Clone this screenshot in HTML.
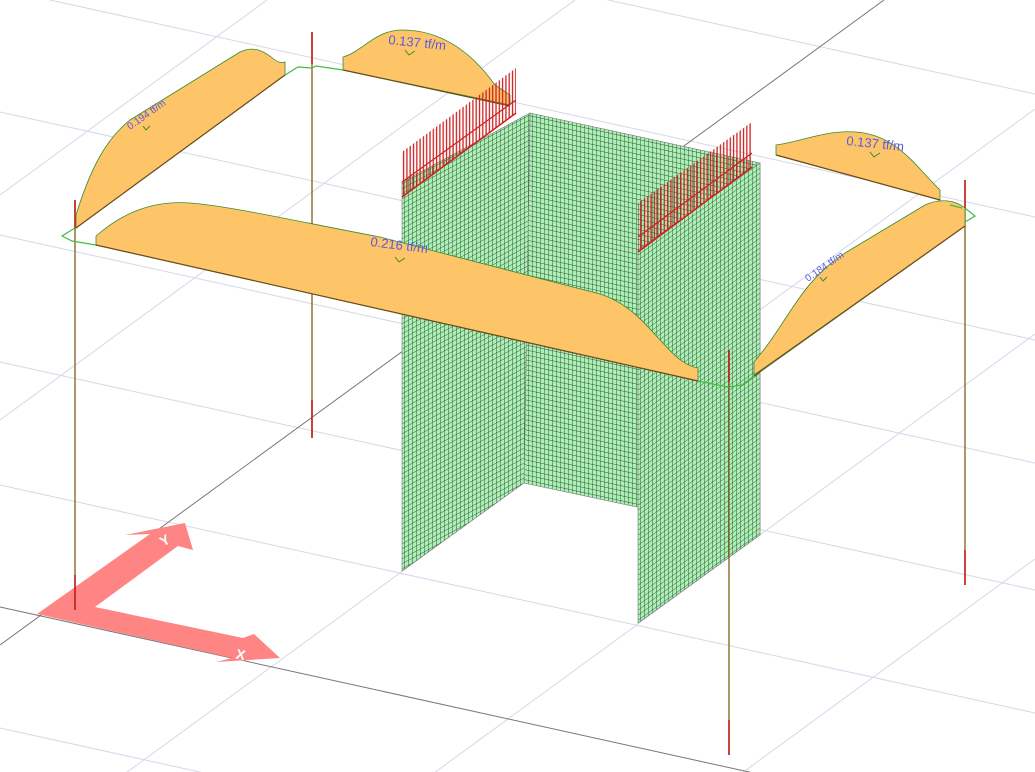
<!DOCTYPE html>
<html><head><meta charset="utf-8"><style>
html,body{margin:0;padding:0;background:#fff;overflow:hidden;width:1035px;height:772px;}
svg{display:block;}
text{font-family:"Liberation Sans",sans-serif;fill:#5a5ae0;}
</style></head><body>
<svg width="1035" height="772" viewBox="0 0 1035 772" xmlns="http://www.w3.org/2000/svg">
<defs>
<pattern id="mL" patternUnits="userSpaceOnUse" width="4" height="5" patternTransform="skewY(-28.3)">
<rect width="4" height="5" fill="#a9f2b3"/>
<path d="M0 0V5M0 0H4" stroke="#3a4a3c" stroke-width="0.9"/>
</pattern>
<pattern id="mB" patternUnits="userSpaceOnUse" width="4" height="5" patternTransform="skewY(12.3)">
<rect width="4" height="5" fill="#a9f2b3"/>
<path d="M0 0V5M0 0H4" stroke="#3a4a3c" stroke-width="0.9"/>
</pattern>
<pattern id="mR" patternUnits="userSpaceOnUse" width="4" height="5" patternTransform="skewY(-35.5)">
<rect width="4" height="5" fill="#a9f2b3"/>
<path d="M0 0V5M0 0H4" stroke="#3a4a3c" stroke-width="0.9"/>
</pattern>
<pattern id="rd" patternUnits="userSpaceOnUse" width="3.3" height="10">
<path d="M1 0V10" stroke="#cc2020" stroke-width="1.3"/>
</pattern>
</defs>

<g stroke="#d6d6ea" stroke-width="1">
<line x1="0" y1="-134" x2="1035" y2="94"/>
<line x1="0" y1="-11" x2="1035" y2="217"/>
<line x1="0" y1="112" x2="1035" y2="340"/>
<line x1="0" y1="235" x2="1035" y2="463"/>
<line x1="0" y1="362" x2="1035" y2="590"/>
<line x1="0" y1="485" x2="1035" y2="713"/>
<line x1="0" y1="728" x2="1035" y2="956"/>
<line x1="0" y1="195" x2="267" y2="0"/>
<line x1="0" y1="420" x2="575" y2="0"/>
<line x1="0" y1="865" x2="1035" y2="109"/>
<line x1="0" y1="1090" x2="1035" y2="334"/>
<line x1="0" y1="1315" x2="1035" y2="559"/>
<line x1="0" y1="1540" x2="1035" y2="784"/>
</g>
<g stroke="#777" stroke-width="1">
<line x1="0" y1="607" x2="1035" y2="835"/>
<line x1="0" y1="645" x2="884" y2="0"/>
</g>

<path d="M37,614 L150,534 L125,535 L185,523 L193,550 L178,546 L95,607 L243,638 L254,634 L280,658 L216,662 L232,658 Z" fill="#ff8585"/>
<text x="160" y="545" transform="rotate(-30 165 540)" style="fill:#fff;font-weight:bold;font-size:14px">Y</text>
<text x="236" y="660" transform="rotate(12 243 655)" style="fill:#fff;font-weight:bold;font-size:14px">X</text>

<g stroke="#8a6a2a" stroke-width="1.4">
<line x1="75" y1="200" x2="75" y2="610"/>
<line x1="312" y1="32" x2="312" y2="438"/>
<line x1="965" y1="180" x2="965" y2="585"/>
</g>
<g stroke="#cc2020" stroke-width="1.6">
<line x1="75" y1="200" x2="75" y2="228"/>
<line x1="312" y1="32" x2="312" y2="64"/>
<line x1="312" y1="400" x2="312" y2="438"/>
<line x1="965" y1="180" x2="965" y2="208"/>
<line x1="965" y1="550" x2="965" y2="585"/>
<line x1="75" y1="575" x2="75" y2="610"/>
</g>

<path d="M343,70 L343,57 C362,52 375,30 402,30 C440,30 470,50 495,85 L510,95 L510,105 Z" fill="#fdc567" stroke="#3a8a30" stroke-width="0.8"/>
<line x1="343" y1="70" x2="510" y2="106" stroke="#6a4a1a" stroke-width="1.2"/>
<text x="388" y="44" font-size="13" transform="rotate(6 388 44)">0.137 tf/m</text>
<path d="M405,50 l4,5 l6,-4" stroke="#3a8a30" fill="none"/>

<path d="M76,228 L76,215 C90,170 105,140 130,120 L240,52 C255,45 265,52 275,60 C280,64 285,62 285,62 L285,75 Z" fill="#fdc567" stroke="#3a8a30" stroke-width="0.8"/>
<line x1="76" y1="228" x2="285" y2="75" stroke="#6a4a1a" stroke-width="1.2"/>
<text x="130" y="130" font-size="10" transform="rotate(-35 130 130)">0.194 tf/m</text>
<path d="M143,126 l3,4 l4,-4" stroke="#3a8a30" fill="none"/>

<path d="M75,228 L62,236 L72,241 L96,245 M285,75 L298,67 L312,68 L316,66 L343,70" stroke="#44bb44" stroke-width="1.2" fill="none"/>

<polygon points="530,113 760,163 760,535 637,507 524,483" fill="url(#mB)" stroke="#777" stroke-width="0.6"/>
<polygon points="402,182 530,113 524,483 402,571" fill="url(#mL)" stroke="#777" stroke-width="0.6"/>
<polygon points="638,250 760,163 760,535 638,623" fill="url(#mR)" stroke="#777" stroke-width="0.6"/>

<polygon points="402,197 516,113 516,68 402,152" fill="url(#rd)"/>
<line x1="402" y1="182" x2="516" y2="100" stroke="#cc2020" stroke-width="1.2"/>
<line x1="402" y1="197" x2="516" y2="113" stroke="#cc2020" stroke-width="1.5"/>
<polygon points="638,252 752,167 752,122 638,203" fill="url(#rd)"/>
<line x1="638" y1="237" x2="752" y2="153" stroke="#cc2020" stroke-width="1.2"/>
<line x1="638" y1="252" x2="752" y2="167" stroke="#cc2020" stroke-width="1.5"/>

<path d="M776,155 L776,145 C800,142 825,130 855,132 C895,134 915,165 935,185 L940,190 L940,200 Z" fill="#fdc567" stroke="#3a8a30" stroke-width="0.8"/>
<line x1="776" y1="155" x2="940" y2="200" stroke="#6a4a1a" stroke-width="1.2"/>
<text x="846" y="145" font-size="13" transform="rotate(6 846 145)">0.137 tf/m</text>
<path d="M870,152 l4,5 l6,-4" stroke="#3a8a30" fill="none"/>

<path d="M96,245 L96,236 C120,215 150,200 190,203 C230,206 300,222 380,237 L600,294 C650,310 665,362 698,368 L698,381 Z" fill="#fdc567" stroke="#3a8a30" stroke-width="0.8"/>
<line x1="96" y1="245" x2="698" y2="381" stroke="#6a4a1a" stroke-width="1.2"/>
<text x="370" y="246" font-size="13" transform="rotate(7 370 246)">0.216 tf/m</text>
<path d="M395,257 l4,5 l6,-4" stroke="#3a8a30" fill="none"/>

<path d="M754,375 L754,362 C790,320 800,280 850,250 L925,205 C940,198 955,200 965,208 L965,226 Z" fill="#fdc567" stroke="#3a8a30" stroke-width="0.8"/>
<line x1="754" y1="376" x2="965" y2="226" stroke="#6a4a1a" stroke-width="1.2"/>
<text x="808" y="282" font-size="10" transform="rotate(-35 808 282)">0.184 tf/m</text>
<path d="M820,277 l3,4 l4,-4" stroke="#3a8a30" fill="none"/>

<path d="M698,381 L728,387 L742,385 L754,376 M965,208 L975,216 L965,222 M950,205 L962,208" stroke="#44bb44" stroke-width="1.2" fill="none"/>

<line x1="729" y1="350" x2="729" y2="755" stroke="#8a6a2a" stroke-width="1.4"/>
<line x1="729" y1="350" x2="729" y2="382" stroke="#cc2020" stroke-width="1.6"/>
<line x1="729" y1="720" x2="729" y2="755" stroke="#cc2020" stroke-width="1.6"/>
</svg>
</body></html>
